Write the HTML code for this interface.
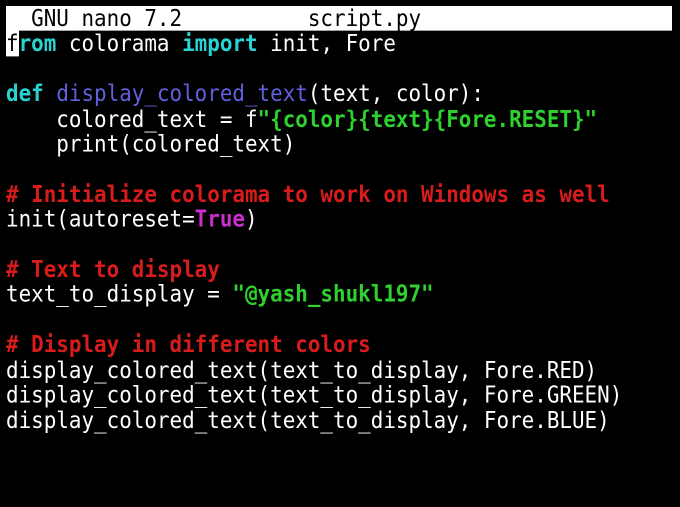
<!DOCTYPE html>
<html><head><style>
body{margin:0;background:#000;width:680px;height:507px;overflow:hidden}
pre{margin:0;position:absolute;left:6px;top:6px;font-family:"DejaVu Sans Mono","Liberation Mono",monospace;font-size:20.9px;line-height:22.4px;color:#fff;transform:scaleY(1.12);transform-origin:0 0}
.t{background:#fff;color:#000;display:inline-block;width:666px}
.k{color:#2ad2d2;font-weight:bold}
.f{color:#6060dd}
.s{color:#2ed12e;font-weight:bold}
.c{color:#d81c1c;font-weight:bold}
.m{color:#cc2ecc;font-weight:bold}
.cur{background:#fff;color:#000}
</style></head><body>
<pre><span class="t">  GNU nano 7.2          script.py</span>
<span class="cur">f</span><span class="k">rom</span> colorama <span class="k">import</span> init, Fore

<span class="k">def</span> <span class="f">display_colored_text</span>(text, color):
    colored_text = f<span class="s">"{color}{text}{Fore.RESET}"</span>
    print(colored_text)

<span class="c"># Initialize colorama to work on Windows as well</span>
init(autoreset=<span class="m">True</span>)

<span class="c"># Text to display</span>
text_to_display = <span class="s">"@yash_shukl197"</span>

<span class="c"># Display in different colors</span>
display_colored_text(text_to_display, Fore.RED)
display_colored_text(text_to_display, Fore.GREEN)
display_colored_text(text_to_display, Fore.BLUE)
</pre>
</body></html>
